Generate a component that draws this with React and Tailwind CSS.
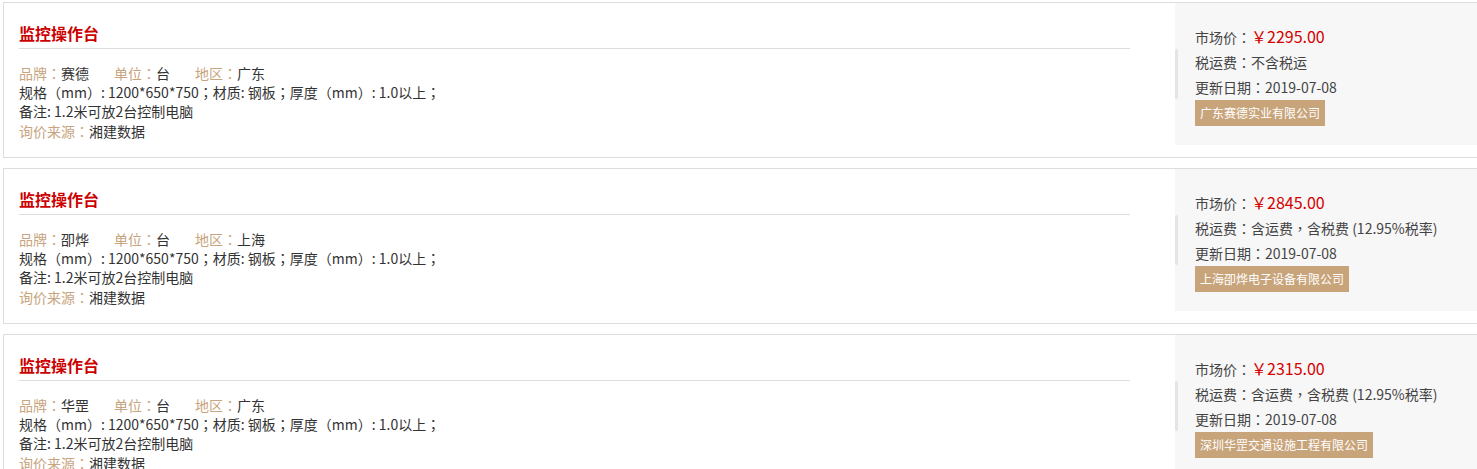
const items = [
  {
    brand: '赛德',
    region: '广东',
    price: '2295.00',
    tax: '不含税运',
    company: '广东赛德实业有限公司',
  },
  {
    brand: '卲烨',
    region: '上海',
    price: '2845.00',
    tax: '含运费，含税费 (12.95%税率)',
    company: '上海卲烨电子设备有限公司',
  },
  {
    brand: '华罡',
    region: '广东',
    price: '2315.00',
    tax: '含运费，含税费 (12.95%税率)',
    company: '深圳华罡交通设施工程有限公司',
  },
];

// full-width punctuation centred in its box, like the original font does
function P({ children }) {
  const parts = String(children).split(/([：；，（）])/);
  return parts.map((s, i) =>
    /^[：；，（）]$/.test(s) ? (
      <span key={i} className="font-['Noto_Sans_CJK_TC']">{s}</span>
    ) : (
      s
    )
  );
}

function Card({ item }) {
  return (
    <div className="flex h-[156px] mb-[10px] ml-[3px] border border-r-0 border-[#dddddd] bg-white">
      <div className="w-[1171px] shrink-0 pl-[15px] pr-[45px]">
        <h3 className="pt-[18px] pb-[3px] leading-[24px] text-[16px] font-bold text-[#cc0000] border-b border-[#dddddd]">
          监控操作台
        </h3>
        <div className="mt-[15px] text-[14px] leading-[19px] text-[#333333]">
          <div className="flex">
            <span className="mr-[25px]">
              <span className="text-[#c8a47e]"><P>品牌：</P></span>
              {item.brand}
            </span>
            <span className="mr-[25px]">
              <span className="text-[#c8a47e]"><P>单位：</P></span>台
            </span>
            <span>
              <span className="text-[#c8a47e]"><P>地区：</P></span>
              {item.region}
            </span>
          </div>
          <div><P>规格（mm）: 1200*650*750；材质: 钢板；厚度（mm）: 1.0以上；</P></div>
          <div>备注: 1.2米可放2台控制电脑</div>
          <div className="mt-[1px]">
            <span className="text-[#c8a47e]"><P>询价来源：</P></span>湘建数据
          </div>
        </div>
      </div>
      <div className="relative flex-1 h-[142px] bg-[#f7f7f7] pl-[20px] pt-[21px] text-[14px] leading-[25px] text-[#444444]">
        <div className="absolute left-0 top-[46px] h-[50px] w-[3px] rounded-sm bg-[#e4e4e4]" />
        <div>
          <P>市场价：</P><span className="text-[16px] text-[#d40000]">￥{item.price}</span>
        </div>
        <div><P>{'税运费：' + item.tax}</P></div>
        <div><P>更新日期：2019-07-08</P></div>
        <div className="inline-block bg-[#c8a47a] px-[5px] text-[12px] leading-[26px] text-white">
          {item.company}
        </div>
      </div>
    </div>
  );
}

export default function App() {
  return (
    <div
      className="h-[469px] overflow-hidden bg-white pt-[2px]"
      style={{ fontFamily: '"Noto Sans CJK SC", "Noto Sans", sans-serif' }}
    >
      {items.map((item, i) => (
        <Card key={i} item={item} />
      ))}
    </div>
  );
}
